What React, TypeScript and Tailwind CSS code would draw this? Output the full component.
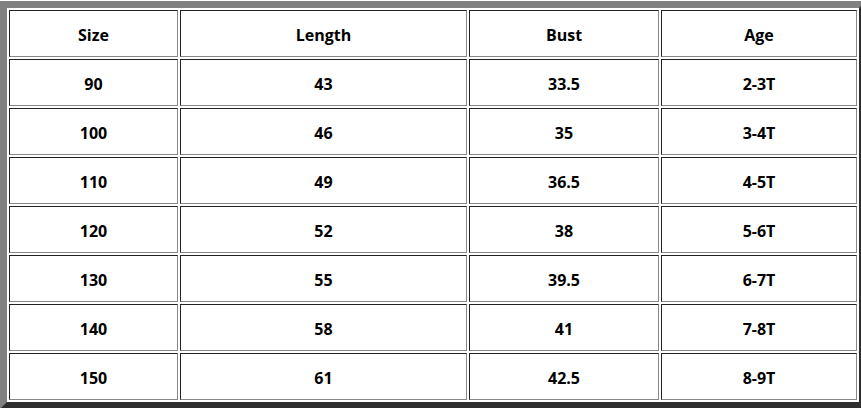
import React from 'react';

const rows = [
    ['Size', 'Length', 'Bust', 'Age'],
    ['90', '43', '33.5', '2-3T'],
    ['100', '46', '35', '3-4T'],
    ['110', '49', '36.5', '4-5T'],
    ['120', '52', '38', '5-6T'],
    ['130', '55', '39.5', '6-7T'],
    ['140', '58', '41', '7-8T'],
    ['150', '61', '42.5', '8-9T'],
];

const App = () => {
    return (
        <div className="w-[861px] h-[408px] overflow-hidden bg-white pt-[1px]">
            <div
                className="w-[866px] border-[7px] border-solid border-t-[#808080] border-l-[#808080] border-r-[#2e2e2e] border-b-[#2e2e2e] bg-white p-[2px]"
                style={{ fontFamily: '"Open Sans", "DejaVu Sans", sans-serif' }}
            >
                <div className="grid grid-cols-[169px_287px_190px_196px] gap-[2px]">
                    {rows.map((row, i) =>
                        row.map((cell, j) => (
                            <div
                                key={`${i}-${j}`}
                                className="h-[47px] flex items-center justify-center border border-solid border-t-[#222] border-l-[#222] border-r-[#888] border-b-[#888] text-[16px] font-bold text-black pt-[3px]"
                            >
                                {cell}
                            </div>
                        ))
                    )}
                </div>
            </div>
        </div>
    );
};

export default App;
